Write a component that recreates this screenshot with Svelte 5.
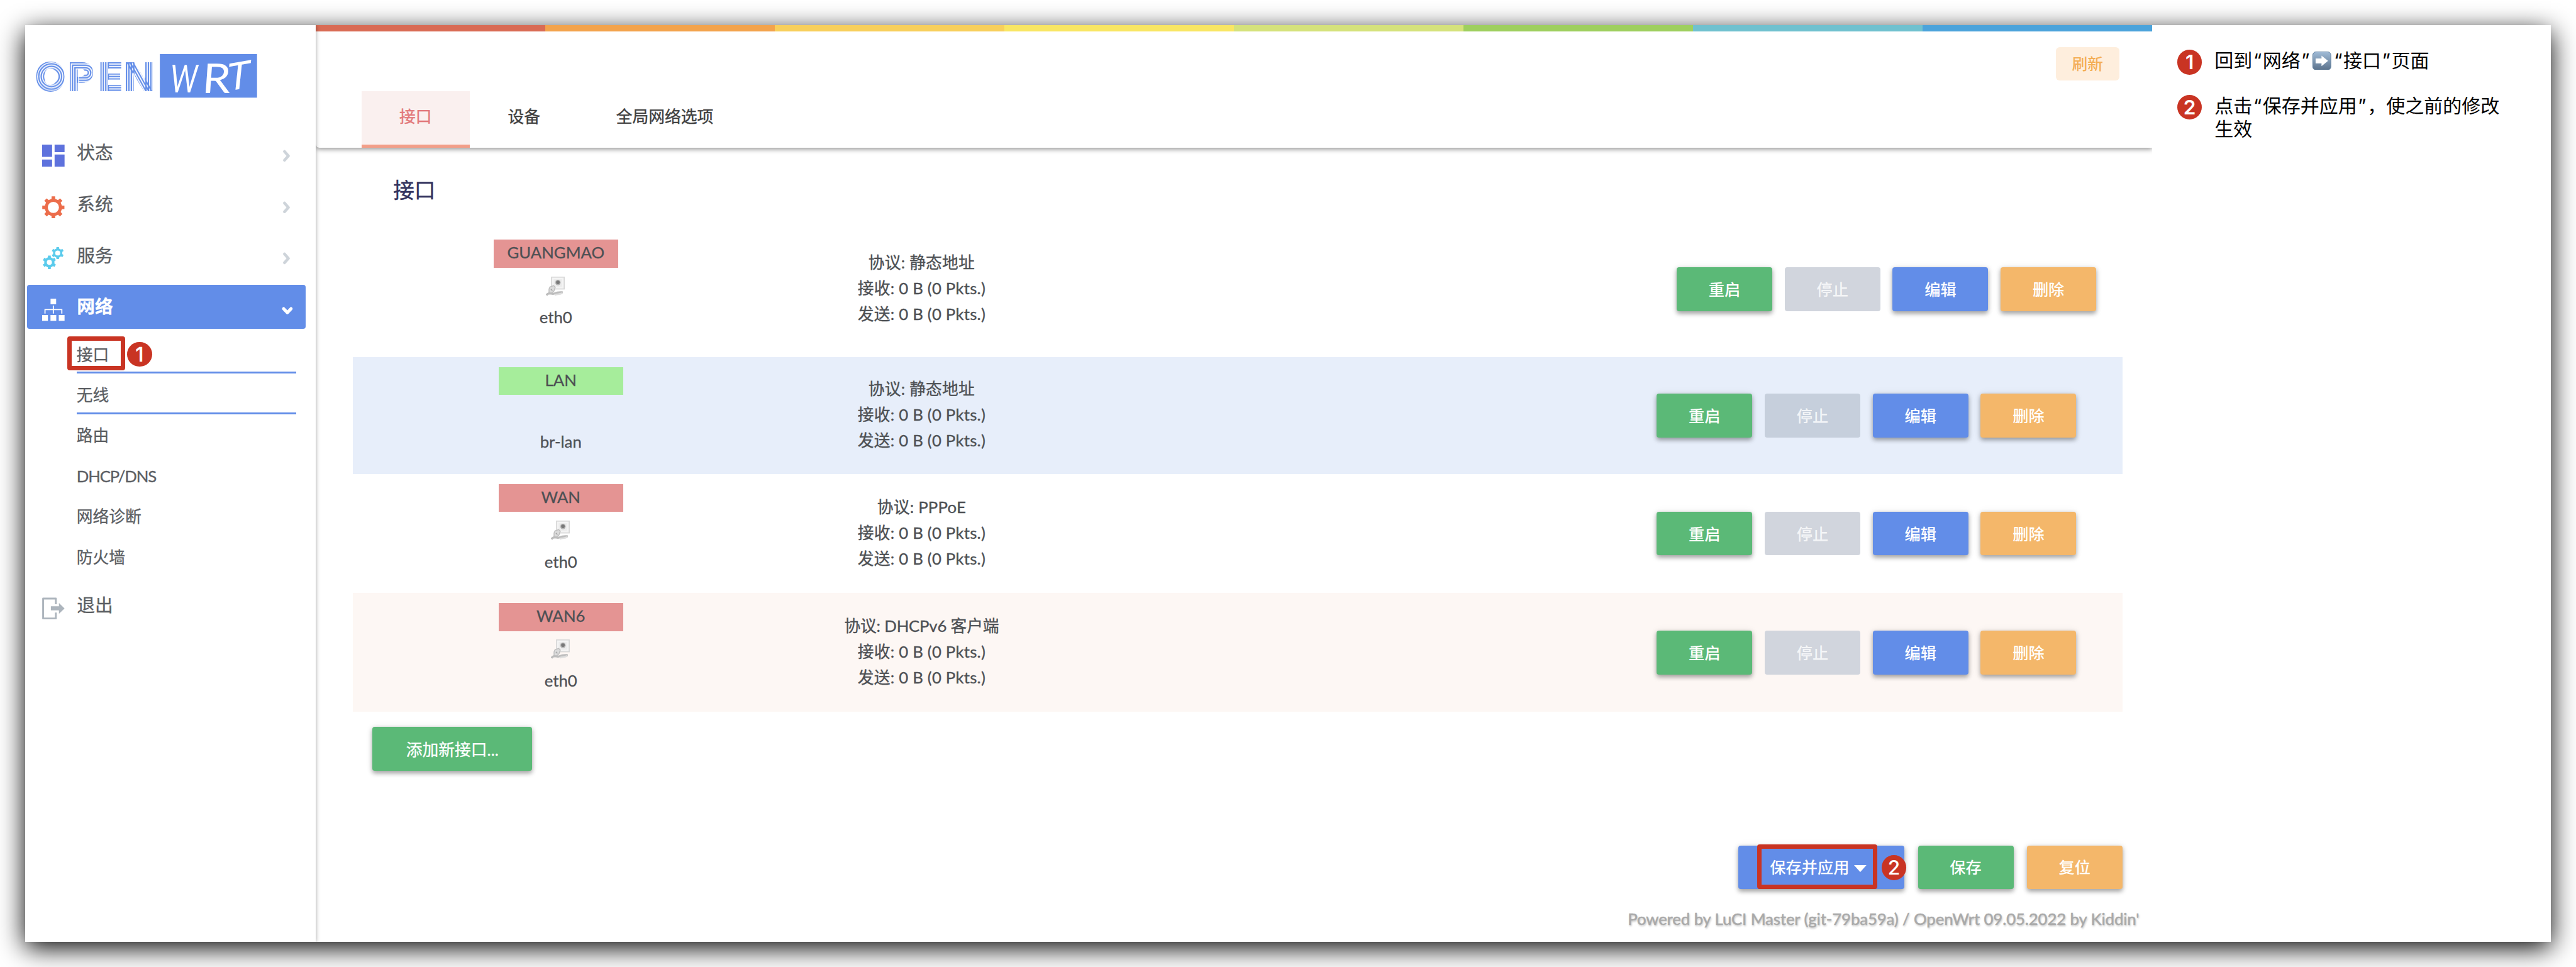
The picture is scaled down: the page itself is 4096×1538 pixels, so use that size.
<script>
  const rainbow = ['#d96b54', '#f3a34c', '#f8cf5b', '#f9e663', '#d5e27b', '#9ecf5e', '#70c1cf', '#4ba3db'];

  const menu = [
    { label: '状态', icon: 'status' },
    { label: '系统', icon: 'system' },
    { label: '服务', icon: 'services' },
    { label: '网络', icon: 'network', active: true }
  ];

  const submenu = [
    { label: '接口', line: true, marked: true },
    { label: '无线', line: true },
    { label: '路由' },
    { label: 'DHCP/DNS', latin: true },
    { label: '网络诊断' },
    { label: '防火墙' }
  ];

  const tabs = ['接口', '设备', '全局网络选项'];

  const rows = [
    { name: 'GUANGMAO', dev: 'eth0', eth: true, proto: '静态地址', kind: 'first' },
    { name: 'LAN', dev: 'br-lan', eth: false, proto: '静态地址', kind: 'lan', up: true },
    { name: 'WAN', dev: 'eth0', eth: true, proto: 'PPPoE', kind: 'wan' },
    { name: 'WAN6', dev: 'eth0', eth: true, proto: 'DHCPv6 客户端', kind: 'wan6' }
  ];

  // Outline of a cog with a round hole, as one even-odd path.
  function cog(cx, cy, outer, base, hole, teeth) {
    const step = (Math.PI * 2) / teeth;
    const at = (r, a) => `${(cx + r * Math.sin(a)).toFixed(2)} ${(cy - r * Math.cos(a)).toFixed(2)}`;
    const pts = [];
    for (let i = 0; i < teeth; i++) {
      const a = i * step;
      pts.push(at(base, a - step * 0.27), at(outer, a - step * 0.2), at(outer, a + step * 0.2), at(base, a + step * 0.27));
    }
    return `M${pts.join('L')}ZM${cx - hole} ${cy}a${hole} ${hole} 0 1 0 ${hole * 2} 0a${hole} ${hole} 0 1 0 ${-hole * 2} 0Z`;
  }
</script>

{#snippet ethIcon()}
  <svg class="eth" viewBox="0 0 32 32">
    <rect x="9" y="0.8" width="20.4" height="19" fill="#f4f4f4" stroke="#d6d6d6" stroke-width="1.6" />
    <rect x="12.5" y="4" width="13.5" height="12.5" fill="#ececec" />
    <circle cx="19.3" cy="9.4" r="4.4" fill="#b5b5b5" />
    <circle cx="19.3" cy="9.2" r="2.9" fill="#787878" />
    <path d="M5 20l1.500-3.500 6-2 2.500 2.500-2 6-4.500 4H5z" fill="#dcdcdc" stroke="#bdbdbd" stroke-width="1.4" />
    <path d="M8 20l2.500 2.500" stroke="#a5a5a5" stroke-width="1.600" />
    <path d="M1 30c3-6 8-1 13-3s9-1.500 13-2" fill="none" stroke="#bdbdbd" stroke-width="3.400" />
    <path d="M14 29.500c4-2 7-.5 12-3" fill="none" stroke="#dedede" stroke-width="2.600" />
  </svg>
{/snippet}

{#snippet actions()}
  <div class="actions">
    <button class="btn green">重启</button>
    <button class="btn gray">停止</button>
    <button class="btn blue">编辑</button>
    <button class="btn orange">删除</button>
  </div>
{/snippet}

<div class="page">
  <div class="window">
    <aside class="sidebar">
      <svg class="logo" viewBox="57 86 358 74">
        <defs>
          <pattern id="stripes" patternUnits="userSpaceOnUse" x="50" y="80" width="220" height="90">
            <g transform="translate(-50 -80)" fill="none" stroke="#628de8" stroke-width="2.200">
              {#each [12.5, 16.4, 20.3, 24] as r}
                <circle cx="83" cy="123" r={r} />
              {/each}
              {#each [0, 1, 2, 3] as i}
                <path d="M{113 + i * 3.9} 160V{101 + i * 3.9}h{25 - i * 3.9}a{16 - i * 3.9} {16 - i * 3.9} 0 0 1 0 {32 - i * 7.8}h-11" />
                <path d="M{162.5 + i * 3.9} 90v70" />
                <path d="M{203.5 + i * 3.9} 80v70M{246.5 - i * 3.9} 90v70M{203.5 + i * 4.5} 98l32 58" />
              {/each}
              {#each [101, 105, 109, 119, 123, 127, 137, 141, 145] as y}
                <path d="M175 {y}h24" />
              {/each}
            </g>
          </pattern>
        </defs>
        <text class="open" y="146.5" x="56.5 109.500 158.500 199" fill="url(#stripes)">OPEN</text>
        <rect x="257" y="87" width="156" height="70" fill="#628de8" />
        <g class="wrt">
          <text transform="translate(272 149) skewX(-6) scale(0.68 1)" font-size="62">W</text>
          <text transform="translate(324 150) skewX(-4) scale(1.1 1)" font-size="66">R</text>
          <text transform="translate(363 147) rotate(-10) skewX(-16) scale(1.05 1)" font-size="60">T</text>
        </g>
      </svg>

      <nav class="menu">
        {#each menu as m}
          <div class="item" class:active={m.active}>
            <svg class="icon" viewBox="0 0 36 36">
              {#if m.icon === 'status'}
                <path fill="#5e72dd" d="M0 0h16v19.600H0zM0 24h16v11.500H0zM20 0h16v12H20zM20 16h16v19.500H20z" />
              {:else if m.icon === 'system'}
                <path fill="#ec6d4b" fill-rule="evenodd" d={cog(18, 18, 18, 14, 9, 8)} />
              {:else if m.icon === 'services'}
                <path fill="#5bcbec" fill-rule="evenodd" d={cog(25, 9.5, 10, 7.6, 4, 6)} />
                <path fill="#5bcbec" fill-rule="evenodd" d={cog(11.6, 24.5, 11, 8.4, 4.1, 6)} />
              {:else}
                <path fill="#fff" d="M13.500 0h9v9h-9zM0 26.300h9.300v9.300H0zM13.400 26.300h9.300v9.300h-9.300zM26.700 26.300H36v9.300h-9.300z" />
                <path fill="none" stroke="#fff" stroke-width="1.800" d="M18 11v13M4.600 24v-6.500h27V24" />
              {/if}
            </svg>
            <span class="label">{m.label}</span>
            {#if m.active}
              <svg class="chev down" viewBox="0 0 20 20"><path d="M4 7l6 6.300L16 7" /></svg>
            {:else}
              <svg class="chev" viewBox="0 0 20 20"><path d="M6.500 3l6.200 7-6.200 7" /></svg>
            {/if}
          </div>
        {/each}
        <div class="submenu">
          {#each submenu as s}
            <div class="sub" class:line={s.line}>
              <span class:latin={s.latin}>{s.label}</span>
              {#if s.marked}
                <i class="mark mark-sub"></i>
                <b class="num num-sub">1</b>
              {/if}
            </div>
          {/each}
        </div>
        <div class="item logout">
          <svg class="icon" viewBox="0 0 36 36">
            <path fill="none" stroke="#adb5bd" stroke-width="3" stroke-linejoin="round" d="M22 11V2H1.600v32H22v-9.500" />
            <path fill="#adb5bd" d="M14 14.500h13V9l9 9-9 8.500v-5.500H14z" />
          </svg>
          <span class="label">退出</span>
        </div>
      </nav>
    </aside>

    <main class="main">
      <header class="head">
        <div class="rainbow">
          {#each rainbow as c}<i style:background={c}></i>{/each}
        </div>
        <div class="topbar"><button class="refresh">刷新</button></div>
        <div class="tabs">
          {#each tabs as t, i}<div class="tab" class:on={i === 0}>{t}</div>{/each}
        </div>
      </header>

      <section class="content">
        <h2>接口</h2>
        {#each rows as r}
          <div class="row {r.kind}">
            <div class="iface">
              <div class="name" class:up={r.up}>{r.name}</div>
              <div class="ethbox">{#if r.eth}{@render ethIcon()}{/if}</div>
              <div class="dev">{r.dev}</div>
            </div>
            <div class="stats">
              <div class="proto">协议: {r.proto}</div>
              <div>接收: 0 B (0 Pkts.)</div>
              <div>发送: 0 B (0 Pkts.)</div>
            </div>
            {@render actions()}
          </div>
        {/each}
        <button class="btn green add">添加新接口...</button>
      </section>

      <footer class="foot">
        <div class="save">
          <div class="btn blue apply">
            <span>保存并应用</span>
            <svg class="tri" viewBox="0 0 20 11"><path d="M0 0h20L10 11z" fill="#fff" /></svg>
            <i class="mark mark-apply"></i>
            <b class="num num-apply">2</b>
          </div>
          <button class="btn green">保存</button>
          <button class="btn orange">复位</button>
        </div>
        <div class="powered">Powered by LuCI Master (git-79ba59a) / OpenWrt 09.05.2022 by Kiddin'</div>
      </footer>
    </main>

    <aside class="notes">
      <div class="note"><b class="num">1</b>
        <p>回到<q>“</q>网络<q>”</q><svg class="arrow" viewBox="0 0 30 30">
            <defs><linearGradient id="sky" x2="0" y2="1"><stop offset="0" stop-color="#9fbad6" /><stop offset="1" stop-color="#5c738c" /></linearGradient></defs>
            <rect x="0.500" y="0.500" width="29" height="29" rx="5" fill="url(#sky)" stroke="#5f7f9f" />
            <path fill="#fff" d="M5 11h9.500V6.500l10.500 8.500-10.500 8.500V19H5z" />
          </svg><q>“</q>接口<q>”</q>页面</p>
      </div>
      <div class="note"><b class="num">2</b>
        <p>点击<q>“</q>保存并应用<q>”</q>，使之前的修改<br />生效</p>
      </div>
    </aside>
  </div>
</div>

<style>
  :global(body) {
    background: #fff;
    overflow: hidden;
  }
  .page {
    zoom: 0.99081;
    box-sizing: border-box;
    width: 4134px;
    height: 1552px;
    padding: 40px;
    font-family: Lato, 'Noto Sans CJK SC', sans-serif;
    font-size: 26px;
    color: #4d5054;
  }
  .page * {
    box-sizing: border-box;
  }
  .window {
    display: flex;
    width: 4054px;
    height: 1472px;
    background: #fff;
    box-shadow: 0 10px 40px #000;
  }
  .sidebar {
    width: 467px;
    padding-top: 46px;
    position: relative;
    z-index: 2;
    background: #fff;
    box-shadow: 1px 0 6px rgba(0, 0, 0, 0.3);
    clip-path: inset(0 -20px 0 0);
  }
  .logo {
    display: block;
    overflow: visible;
    width: 358px;
    height: 74px;
    margin-left: 17px;
  }
  .open {
    font: 900 64px Inter, sans-serif;
  }
  .wrt {
    font-family: Lato, sans-serif;
    font-weight: 400;
    fill: #fff;
  }
  .menu {
    padding: 50px 16px 0 3px;
  }
  .item {
    display: flex;
    align-items: center;
    height: 70px;
    margin-bottom: 12.6px;
    padding: 0 16px 0 25px;
    border-radius: 4px;
    font-size: 29px;
    color: #5b5e63;
  }
  .item.active {
    margin-bottom: 7px;
    background: #628de8;
    color: #fff;
    font-weight: 700;
  }
  .icon {
    width: 36px;
    height: 36px;
    margin: 10px 19.500px 0 0;
  }
  .label {
    line-height: 40px;
    margin-top: 0;
    margin-right: auto;
    -webkit-text-stroke: 0.3px currentColor;
  }
  .chev {
    width: 20px;
    height: 20px;
    margin: 10px 5px 0 0;
    fill: none;
    stroke: #ced4da;
    stroke-width: 4.5;
  }
  .chev path {
    stroke-linecap: round;
    stroke-linejoin: round;
  }
  .chev.down {
    stroke: #fff;
    stroke-width: 5;
    margin: 12px 4px 0 0;
  }
  .submenu {
    margin: 0 16px 0 80px;
  }
  .sub {
    position: relative;
    height: 65px;
    padding-top: 10px;
    line-height: 50px;
    border-bottom: 4px solid transparent;
    color: #5b5e63;
    -webkit-text-stroke: 0.3px currentColor;
  }
  .sub.line {
    border-color: #628de8;
  }
  .sub .latin {
    letter-spacing: -1.2px;
  }
  .logout {
    margin-top: 12px;
  }
  .mark {
    position: absolute;
    border: 8px solid #c93423;
    border-radius: 4px;
  }
  .mark-sub {
    left: -15.500px;
    top: 5px;
    width: 93px;
    height: 55px;
  }
  .num {
    display: flex;
    flex: none;
    align-items: center;
    justify-content: center;
    width: 40px;
    height: 40px;
    border-radius: 50%;
    background: #c93423;
    color: #fff;
    font: 600 32px/40px Inter, sans-serif;
  }
  .num-sub {
    position: absolute;
    left: 81px;
    top: 14px;
    font-weight: 500;
  }
  .main {
    display: flex;
    flex-direction: column;
    width: 2947px;
    position: relative;
    overflow: hidden;
  }
  .head {
    height: 197px;
    border-radius: 0 0 0 6px;
    box-shadow: 0 3px 7px rgba(0, 0, 0, 0.38);
  }
  .rainbow {
    display: flex;
    height: 10px;
  }
  .rainbow i {
    flex: 1;
  }
  .topbar {
    display: flex;
    justify-content: flex-end;
    height: 96px;
    padding: 26px 53px 0 0;
  }
  .refresh {
    width: 102px;
    height: 53px;
    padding: 0 0 4px;
    border: 0;
    border-radius: 6px;
    background: #feeedd;
    color: #f4ae55;
    font: 500 25px 'Noto Sans CJK SC', sans-serif;
  }
  .tabs {
    display: flex;
    height: 91px;
    padding-left: 73px;
  }
  .tab {
    padding: 0 61px;
    line-height: 82px;
    color: #404040;
    -webkit-text-stroke: 0.4px currentColor;
  }
  .tab.on {
    background: #faf0ef;
    border-bottom: 6px solid #f29e88;
    color: #e2777a;
  }
  .content {
    height: 1120px;
    padding: 32px 48px 0 59px;
  }
  h2 {
    margin: 0 0 50px 65px;
    height: 50px;
    font: 400 34px/68px 'Noto Sans CJK SC', sans-serif;
    color: #32325d;
    -webkit-text-stroke: 0.4px currentColor;
  }
  .row {
    display: flex;
    align-items: center;
    height: 191px;
    padding-right: 74px;
  }
  .row.first {
    height: 190px;
    margin-bottom: 14px;
    padding-right: 42px;
  }
  .row.lan {
    height: 188px;
    background: #e7eefa;
  }
  .row.wan6 {
    background: #fdf7f4;
  }
  .iface {
    display: flex;
    flex-direction: column;
    align-items: center;
    align-self: flex-start;
    width: 668px;
    padding-top: 16px;
  }
  .first .iface {
    width: 652px;
  }
  .name {
    width: 200px;
    height: 45px;
    line-height: 42px;
    text-align: center;
    background: #e49493;
    -webkit-text-stroke: 0.3px currentColor;
  }
  .name.up {
    background: #a6ed9b;
  }
  .ethbox {
    height: 32px;
    margin-top: 14px;
  }
  .eth {
    display: block;
    width: 32px;
    height: 32px;
  }
  .dev {
    margin-top: 14px;
    line-height: 40px;
    -webkit-text-stroke: 0.3px currentColor;
  }
  .lan .dev {
    margin-top: 9px;
  }
  .stats {
    width: 490px;
    margin-top: -2px;
    text-align: center;
    line-height: 41.5px;
    letter-spacing: 0.22px;
    -webkit-text-stroke: 0.35px currentColor;
  }
  .wan6 .proto {
    letter-spacing: -0.2px;
  }
  .first .stats {
    width: 522px;
  }
  .actions {
    display: flex;
    gap: 20px;
    margin-left: auto;
  }
  .btn {
    width: 153.3px;
    height: 70.500px;
    padding: 0 0 2px;
    border: 0;
    border-radius: 4px;
    color: #fff;
    font: 500 25.500px Lato, 'Noto Sans CJK SC', sans-serif;
    box-shadow: 0 4px 8px rgba(0, 0, 0, 0.34), 0 0 14px rgba(0, 0, 0, 0.06);
  }
  .green {
    background: #5bb977;
  }
  .gray {
    background: #d1d5dd;
    color: rgba(255, 255, 255, 0.8);
    box-shadow: none;
  }
  .lan .gray {
    background: #c6cfdc;
  }
  .blue {
    background: #628de8;
  }
  .orange {
    background: #f4b76a;
  }
  .add {
    display: block;
    width: 256px;
    margin: 24px 0 0 32px;
    font-weight: 400;
    font-size: 26px;
    -webkit-text-stroke: 0.3px currentColor;
  }
  .foot {
    padding: 0 21px 0 0;
  }
  .save {
    display: flex;
    justify-content: flex-end;
    gap: 21.500px;
    padding-right: 27px;
  }
  .apply {
    position: relative;
    display: flex;
    align-items: center;
    width: 267px;
    padding-left: 51px;
  }
  .tri {
    width: 20px;
    height: 11px;
    margin: 6px 0 0 8px;
  }
  .mark-apply {
    left: 30px;
    top: -2px;
    width: 193px;
    height: 72px;
  }
  .num-apply {
    position: absolute;
    left: 230px;
    top: 16px;
    font-weight: 500;
  }
  .powered {
    margin-top: 28px;
    text-align: right;
    line-height: 40px;
    letter-spacing: -0.11px;
    color: #a9a9a9;
    text-shadow: 1px 2px 3px rgba(0, 0, 0, 0.25);
    white-space: nowrap;
    -webkit-text-stroke: 0.5px currentColor;
  }
  .notes {
    width: 640px;
    padding: 40px 0 0 40px;
    color: #000;
  }
  .note {
    display: flex;
    height: 72px;
  }
  .note p {
    margin: -2px 0 0 20px;
    font: 400 30.300px/36px 'Noto Sans CJK SC', sans-serif;
    white-space: nowrap;
  }
  .note q {
    quotes: none;
    display: inline-block;
    width: 16.500px;
    font-family: Inter, sans-serif;
    text-align: center;
  }
  .note q::before,
  .note q::after {
    content: none;
  }
  .arrow {
    width: 30px;
    height: 30px;
    vertical-align: -4px;
    margin: 0 3px;
  }
</style>
